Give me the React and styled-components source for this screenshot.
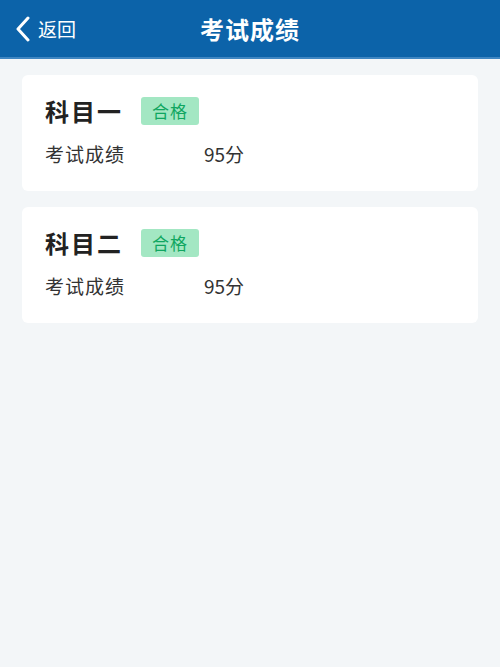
import React from 'react'
import styled, { createGlobalStyle } from 'styled-components'

const GlobalStyle = createGlobalStyle`
    html, body {
        margin: 0;
        padding: 0;
        background-color: #f3f6f8;
        font-family: "Noto Sans CJK SC", "Noto Sans", sans-serif;
    }
`

const Page = styled.div`
    width: 100%;
    min-height: 667px;
    background-color: #f3f6f8;
`

const Header = styled.div`
    height: 57px;
    background-color: #0c63a9;
    border-bottom: 2px solid #3f86c2;
    display: flex;
    align-items: center;
    position: relative;
    color: white;
`

const BackButton = styled.div`
    display: flex;
    align-items: center;
    gap: 7px;
    padding-left: 15px;
    font-size: 19px;
    cursor: pointer;
`

const Title = styled.div`
    position: absolute;
    left: 0;
    right: 0;
    text-align: center;
    font-size: 24px;
    font-weight: 700;
    letter-spacing: 1px;
    pointer-events: none;
`

const List = styled.div`
    display: flex;
    flex-direction: column;
    gap: 16px;
    padding: 16px 22px;
`

const Card = styled.div`
    background-color: white;
    border-radius: 6px;
    padding: 18px 23px 24px;
    display: flex;
    flex-direction: column;
    gap: 12px;
`

const CardHead = styled.div`
    display: flex;
    align-items: center;
    gap: 18px;
`

const Subject = styled.div`
    font-size: 24px;
    font-weight: 700;
    color: #222;
    letter-spacing: 2px;
`

const Badge = styled.div`
    background-color: #a3e7c3;
    color: #0fa660;
    font-size: 17px;
    border-radius: 3px;
    padding: 0 11px;
    height: 28px;
    display: flex;
    align-items: center;
    letter-spacing: 1px;
`

const ScoreRow = styled.div`
    display: flex;
    align-items: center;
    font-size: 19px;
    color: #333;
`

const Label = styled.div`
    width: 159px;
    letter-spacing: 1px;
`

const subjects = [
    { name: '科目一', status: '合格', score: '95分' },
    { name: '科目二', status: '合格', score: '95分' },
]

export default function App() {
    return (
        <Page>
            <GlobalStyle />
            <Header>
                <BackButton>
                    <svg width="16" height="26" viewBox="0 0 16 26">
                        <path d="M13 2 L3 13 L13 24" fill="none" stroke="white" strokeWidth="3" strokeLinecap="round" strokeLinejoin="round" />
                    </svg>
                    返回
                </BackButton>
                <Title>考试成绩</Title>
            </Header>
            <List>
                {subjects.map((s) => (
                    <Card key={s.name}>
                        <CardHead>
                            <Subject>{s.name}</Subject>
                            <Badge>{s.status}</Badge>
                        </CardHead>
                        <ScoreRow>
                            <Label>考试成绩</Label>
                            {s.score}
                        </ScoreRow>
                    </Card>
                ))}
            </List>
        </Page>
    )
}
